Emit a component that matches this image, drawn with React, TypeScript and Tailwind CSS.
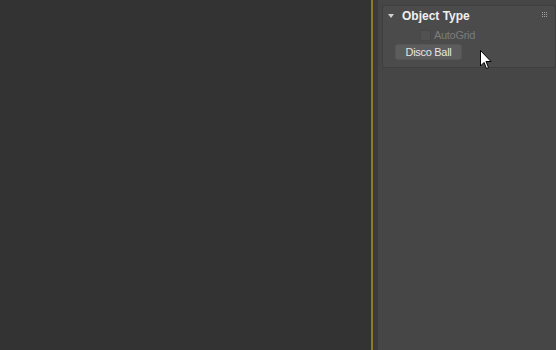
import React from "react";

export default function App() {
  return (
    <div
      className="flex w-[556px] h-[350px] overflow-hidden"
      style={{ fontFamily: "'Liberation Sans', Arial, sans-serif" }}
    >
      <div className="w-[371px] h-full bg-[#333333]" />
      <div className="w-[2px] h-full bg-[#8c7a28]" />
      <div className="w-[5px] h-full bg-[#3b3b3b]" />
      <div className="flex-1 h-full bg-[#464646] pl-[4px] pt-[5px] relative">
        <div className="h-[63px] bg-[#4b4b4b] border border-[#3f3f3f] rounded-[2px] relative">
          <div className="flex items-center h-[18px] pl-[4px] pt-[2px]">
            <svg width="6" height="5" viewBox="0 0 6 5" className="ml-[1px]">
              <polygon points="0,0 6,0 3,4" fill="#d0d0d0" />
            </svg>
            <span className="ml-[8px] text-[12px] font-bold text-[#f0f0f0] leading-none">Object Type</span>
          </div>
          <div className="absolute right-[8px] top-[6px] grid grid-cols-3 gap-[1px]">
            {Array.from({ length: 9 }).map((_, i) => (
              <div key={i} className="w-[1px] h-[1px] bg-[#a0a0a0]" />
            ))}
          </div>
          <div className="flex items-center h-[15px] pl-[37px] mt-[4px]">
            <div className="w-[11px] h-[11px] bg-[#515151] border border-[#474747]" />
            <span className="ml-[3px] text-[11px] tracking-[-0.3px] text-[#7c7c7c] leading-none">AutoGrid</span>
          </div>
          <div className="pl-[12px] mt-[1px]">
            <div className="w-[67px] h-[16px] bg-[#5c5c5c] rounded-[3px] flex items-center justify-center text-[11px] tracking-[-0.3px] text-[#e6e6e6] leading-none border border-[#565656]">
              Disco Ball
            </div>
          </div>
        </div>
        <svg
          className="absolute left-[102px] top-[50px]"
          width="12"
          height="20"
          viewBox="0 0 12 20"
        >
          <path
            d="M0.5 0.5 L0.5 16 L4 12.5 L6.5 18.5 L8.5 17.5 L6 11.5 L11 11.5 Z"
            fill="#ffffff"
            stroke="#000000"
            strokeWidth="1"
          />
        </svg>
      </div>
    </div>
  );
}
